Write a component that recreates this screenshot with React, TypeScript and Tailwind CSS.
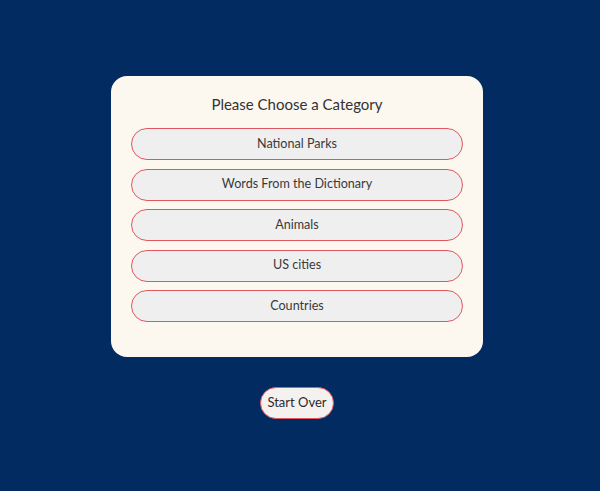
import React from "react";

const cats = ["National Parks", "Words From the Dictionary", "Animals", "US cities", "Countries"];

export default function App() {
  return (
    <div
      className="w-[600px] h-[491px] bg-[#012b61] flex flex-col items-center pt-[76px] pr-[6px]"
      style={{ fontFamily: "Lato, 'Open Sans', sans-serif" }}
    >
      <div className="w-[372px] h-[281px] bg-[#fcf8ef] rounded-[16px] px-[20px] pt-[17px] flex flex-col">
        <div className="text-center text-[15px] leading-[22px] text-[#333] mb-[13px]">Please Choose a Category</div>
        <div className="flex flex-col gap-[8.5px]">
          {cats.map((c) => (
            <button
              key={c}
              className="h-[32px] w-full rounded-full border border-[#e0585f] bg-[#efefef] text-[12.6px] text-[#3a3a3a] text-center"
            >
              {c}
            </button>
          ))}
        </div>
      </div>
      <button className="mt-[30px] h-[32px] w-[74px] rounded-full border border-[#e0585f] bg-[#f5f1ef] text-[13px] text-[#2a2a2a]">
        Start Over
      </button>
    </div>
  );
}
